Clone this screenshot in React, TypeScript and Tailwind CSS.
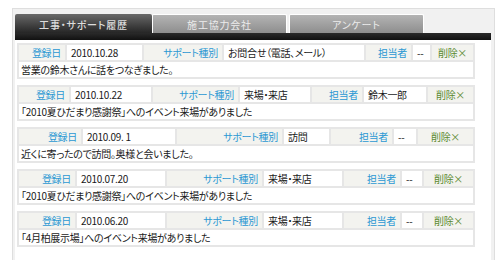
import React from "react";

interface SupportRecord {
  date: string;
  kind: string;
  staff: string;
  note: string;
  cols: string[];
}

const records: SupportRecord[] = [
  {
    date: "2010.10.28",
    kind: "お問合せ（電話、メール）",
    staff: "--",
    note: "営業の鈴木さんに話をつなぎました。",
    cols: ["w-[48px]", "w-[77px]", "w-[80px]", "w-[142px]", "w-[47px]", "w-[19px]", "w-[43px]"],
  },
  {
    date: "2010.10.22",
    kind: "来場・来店",
    staff: "鈴木一郎",
    note: "「2010夏ひだまり感謝祭」へのイベント来場がありました",
    cols: ["w-[52px]", "w-[82px]", "w-[87px]", "w-[72px]", "w-[52px]", "w-[64px]", "w-[47px]"],
  },
  {
    date: "2010.09. 1",
    kind: "訪問",
    staff: "--",
    note: "近くに寄ったので訪問。奥様と会いました。",
    cols: ["w-[64px]", "w-[94px]", "w-[107px]", "w-[47px]", "w-[63px]", "w-[24px]", "w-[57px]"],
  },
  {
    date: "2010.07.20",
    kind: "来場・来店",
    staff: "--",
    note: "「2010夏ひだまり感謝祭」へのイベント来場がありました",
    cols: ["w-[58px]", "w-[90px]", "w-[97px]", "w-[80px]", "w-[58px]", "w-[22px]", "w-[51px]"],
  },
  {
    date: "2010.06.20",
    kind: "来場・来店",
    staff: "--",
    note: "「4月柏展示場」へのイベント来場がありました",
    cols: ["w-[58px]", "w-[90px]", "w-[97px]", "w-[80px]", "w-[58px]", "w-[22px]", "w-[51px]"],
  },
];

const tabs = ["工事・サポート履歴", "施工協力会社", "アンケート"];

const label = "h-[17px] border-2 border-[#e6e6e6] bg-[#f3f3ef] pr-[4px] text-right text-[#2b98d3]";
const value = "h-[17px] border-2 border-[#e6e6e6] bg-white pl-[4px] text-left text-[#1a1a1a]";

const RecordTable: React.FC<{ record: SupportRecord }> = ({ record }) => (
  <table className="w-[456px] table-fixed border-collapse border-2 border-[#e2e2e2]">
    <colgroup>
      {record.cols.map((c, i) => (
        <col key={i} className={c} />
      ))}
    </colgroup>
    <tbody>
      <tr>
        <td className={label}>登録日</td>
        <td className={value}>{record.date}</td>
        <td className={label}>サポート種別</td>
        <td className={`${value} whitespace-nowrap`}>{record.kind}</td>
        <td className={label}>担当者</td>
        <td className={value}>{record.staff}</td>
        <td className="h-[17px] border-2 border-[#e6e6e6] bg-[#f3f3ef] text-center text-[#5a8a30]">
          削除×
        </td>
      </tr>
      <tr>
        <td colSpan={7} className="h-[17px] border-2 border-[#e6e6e6] bg-white pl-[2px] text-left text-[#1a1a1a]">
          {record.note}
        </td>
      </tr>
    </tbody>
  </table>
);

export default function App() {
  return (
    <div className="h-[260px] w-[500px] overflow-hidden bg-white pl-3 pt-2 font-['Noto_Sans_CJK_JP',sans-serif] text-[10px] leading-none tracking-[-0.3px] [font-feature-settings:'palt']">
      <div className="h-[260px] w-[483px] border border-b-0 border-[#dedede] bg-[#f1f1f1] pl-[2px] pr-[3px] pt-[5px]">
        <div className="flex h-[19px] items-end">
          {tabs.map((t, i) =>
            i === 0 ? (
              <div
                key={t}
                className="flex h-[19px] w-[137px] items-center justify-center rounded-t-[2px] bg-gradient-to-b from-[#6a6a6a] to-[#262626] pt-[2px] font-medium tracking-[0.8px] text-[#dcdcdc]"
              >
                {t}
              </div>
            ) : (
              <div
                key={t}
                className={`flex h-[19px] w-[135px] items-center justify-center rounded-t-[2px] border border-b-0 border-white bg-gradient-to-b from-[#b4b4b4] to-[#8e8e8e] pt-[2px] tracking-[0.8px] text-[#ececec] ${
                  i === 2 ? "ml-[2px]" : ""
                }`}
              >
                {t}
              </div>
            )
          )}
        </div>
        <div className="h-[7px] bg-gradient-to-b from-[#2a2a2a] to-[#111]" />
        <div className="flex h-[220px] flex-col gap-[6px] bg-white pl-[2px] pt-[3px]">
          {records.map((r, i) => (
            <RecordTable key={i} record={r} />
          ))}
        </div>
      </div>
    </div>
  );
}
